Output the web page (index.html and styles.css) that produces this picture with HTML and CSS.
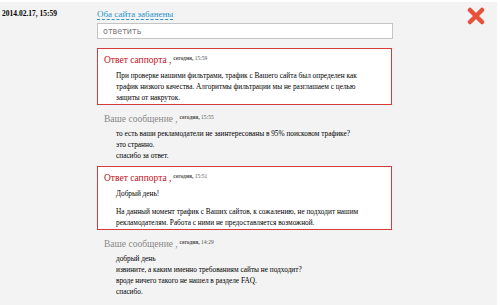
FILE: index.html
```html
<!doctype html>
<html>
<head>
<meta charset="utf-8">
<title>Тикет</title>
<link rel="stylesheet" href="styles.css">
</head>
<body>
<div id="wrap">
	<div class="date">2014.02.17, 15:59</div>
	<div id="content">
		<a href="#" class="subject">Оба сайта забанены</a>
		<input type="text" class="reply" placeholder="ответить">
		<div class="msg support">
			<div class="head"><span class="who">Ответ саппорта ,</span> <span class="time"><b>сегодня,</b> 15:59</span></div>
			<div class="text">При проверке нашими фильтрами, трафик с Вашего сайта был определен как трафик низкого качества. Алгоритмы фильтрации мы не разглашаем с целью защиты от накруток.</div>
		</div>
		<div class="msg user">
			<div class="head"><span class="who">Ваше сообщение ,</span> <span class="time"><b>сегодня,</b> 15:55</span></div>
			<div class="text">то есть ваши рекламодатели не заинтересованы в 95% поисковом трафике?<br>это странно.<br>спасибо за ответ.</div>
		</div>
		<div class="msg support">
			<div class="head"><span class="who">Ответ саппорта ,</span> <span class="time"><b>сегодня,</b> 15:51</span></div>
			<div class="text">
				<p>Добрый день!</p>
				<p>На данный момент трафик с Ваших сайтов, к сожалению, не подходит нашим рекламодателям. Работа с ними не предоставляется возможной.</p>
			</div>
		</div>
		<div class="msg user">
			<div class="head"><span class="who">Ваше сообщение ,</span> <span class="time"><b>сегодня,</b> 14:29</span></div>
			<div class="text">добрый день<br>извините, а каким именно требованиям сайты не подходит?<br>вроде ничего такого не нашел в разделе FAQ.<br>спасибо.</div>
		</div>
	</div>
	<a href="#" class="close">
		<svg width="18" height="18" viewBox="0 0 18 18"><path d="M3 3 L15 15 M15 3 L3 15" stroke="#e8503a" stroke-width="4.5" stroke-linecap="round"/></svg>
	</a>
</div>
</body>
</html>
```
FILE: styles.css
```css
body,div,a,span,input,p{margin: 0; padding: 0;}
body{
	font-family: "Liberation Serif", "Times New Roman", serif;
	font-size: 7.3px;
	color: #000;
	background-color: #fff;
}
#wrap{
	display: flex;
	height: 303px;
	margin-right: 3px;
	border-top: 2px solid #fff;
	background-color: #f3f3f3;
	overflow: hidden;
}
.date{
	width: 95px;
	padding: 7px 0 0 2px;
	font-weight: bold;
	font-size: 7.5px;
}
#content{
	width: 296px;
	padding-top: 8px;
}
.subject{
	display: inline-block;
	font-size: 9px;
	color: #2a93cf;
	text-decoration: none;
	border-bottom: 1px dashed #2a93cf;
	line-height: 9px;
}
.reply{
	display: block;
	box-sizing: border-box;
	width: 296px;
	height: 16px;
	margin-top: 3px;
	margin-bottom: 9px;
	padding-left: 5px;
	border: 1px solid #c4c4c4;
	background-color: #fff;
	font-family: "DejaVu Sans", sans-serif;
	font-size: 8px;
}
.reply::placeholder{
	color: #777;
}
.msg{
	margin-top: 3px;
	padding: 4px 6px 1px 6px;
	box-sizing: border-box;
	width: 295px;
}
.msg.user{
	margin-top: 2px;
}
.support{
	background-color: #fff;
	border: 1px solid #d63a3a;
}
.user{
	border: 1px solid transparent;
}
.head{
	line-height: 14px;
}
.who{
	font-size: 9.5px;
}
.support .who{
	color: #c8101a;
}
.user .who{
	color: #888;
}
.time{
	position: relative;
	top: -3px;
	font-size: 5.5px;
	color: #555;
}
.text{
	padding: 1.5px 15px 0 12px;
	line-height: 11px;
}
.text p + p{
	margin-top: 7px;
}
.close{
	margin: 5px 0 0 74px;
	width: 18px;
	height: 18px;
}
```
